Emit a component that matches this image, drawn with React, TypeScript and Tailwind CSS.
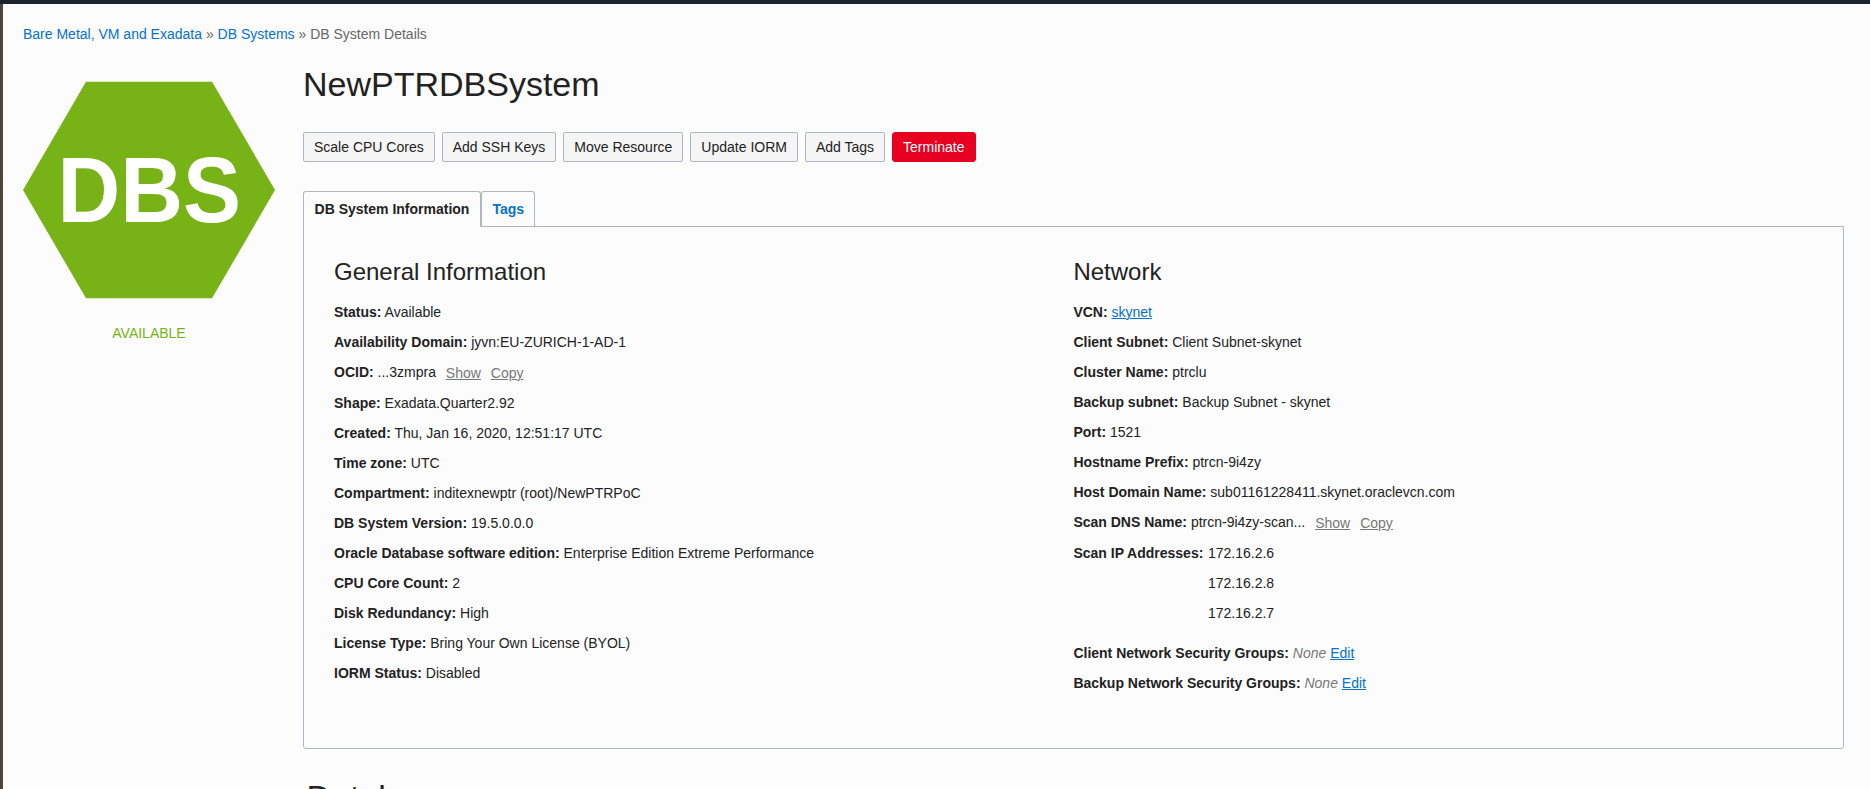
import type { ReactNode } from "react";

const actions = ["Scale CPU Cores", "Add SSH Keys", "Move Resource", "Update IORM", "Add Tags"];

function Row({ label, tall, children }: { label: string; tall?: boolean; children: ReactNode }) {
  return (
    <div className={tall ? "h-[31px] leading-[30px]" : "h-[30px] leading-[30px]"}>
      <span className="font-bold">{label}:</span> {children}
    </div>
  );
}

function BlueLink({ children }: { children: ReactNode }) {
  return (
    <a href="#" className="text-[#0572ce] underline">
      {children}
    </a>
  );
}

function ShowCopy() {
  return (
    <span className="relative top-px ml-[6px] inline-flex gap-[10px] text-[#777777]">
      <a href="#" className="underline">Show</a>
      <a href="#" className="underline">Copy</a>
    </span>
  );
}

function StatusBadge() {
  return (
    <div className="w-[252px] shrink-0">
      <svg viewBox="0 0 252 217" className="block h-[217px] w-[252px] overflow-visible">
        <polygon points="0,108 63,-0.3 189,-0.3 252,108 189,216.3 63,216.3" fill="#77b316" />
        <text
          x="0"
          y="0"
          transform="translate(126.3 140) scale(0.94 1)"
          textAnchor="middle"
          fill="#ffffff"
          fontSize="92.5"
          fontWeight="700"
          fontFamily="Liberation Sans, Arial, sans-serif"
        >
          DBS
        </text>
      </svg>
      <div className="mt-6 text-center leading-5 text-[#77b316]">AVAILABLE</div>
    </div>
  );
}

export default function App() {
  return (
    <div className="flex h-[789px] w-[1870px] flex-col overflow-hidden bg-[#fcfcfc] font-['Liberation_Sans',Arial,sans-serif] text-[14px] text-[#222222]">
      <div className="h-1 shrink-0 bg-[#1b2430]" />
      <div className="flex min-h-0 grow">
        <div className="w-[3px] shrink-0 bg-[#51443a]" />
        <div className="min-w-0 grow pl-5 pt-5">
          <nav className="h-5 leading-5 text-[#666666]">
            <a href="#" className="text-[#0572ce]">Bare Metal, VM and Exadata</a> »{" "}
            <a href="#" className="text-[#0572ce]">DB Systems</a> » DB System Details
          </nav>

          <div className="flex gap-7">
            <div className="pt-[38px]">
              <StatusBadge />
            </div>

            <main className="w-[1541px] pt-5">
              <h1 className="h-10 text-[34px] leading-10">NewPTRDBSystem</h1>

              <div className="mt-7 flex gap-[7px]">
                {actions.map((name) => (
                  <button
                    key={name}
                    className="h-[30px] rounded-[2px] border border-[#b0b7c3] bg-[#f5f5f5] px-[10px] leading-7"
                  >
                    {name}
                  </button>
                ))}
                <button className="h-[30px] rounded-[3px] border border-[#e7001f] bg-[#e7001f] px-[10px] leading-7 text-white">
                  Terminate
                </button>
              </div>

              <div className="mt-[29px] flex font-bold leading-[34px]">
                <div className="relative -mb-px h-9 rounded-t-[3px] border border-b-0 border-[#b0b7c3] bg-[#fcfcfc] px-[10.6px]">
                  DB System Information
                </div>
                <a
                  href="#"
                  className="h-[35px] rounded-t-[3px] border border-b-0 border-[#b0b7c3] pl-[10.4px] pr-[10px] text-[#0572ce]"
                >
                  Tags
                </a>
              </div>

              <section className="flex h-[523px] rounded-b-[3px] border border-[#b0b7c3] px-[30px] pt-[30px]">
                <div className="w-[739.4px] shrink-0">
                  <h2 className="mb-[10px] h-[30px] text-[24px] leading-[30px]">General Information</h2>
                  <Row label="Status">Available</Row>
                  <Row label="Availability Domain">jyvn:EU-ZURICH-1-AD-1</Row>
                  <Row label="OCID" tall>...3zmpra <ShowCopy /></Row>
                  <Row label="Shape">Exadata.Quarter2.92</Row>
                  <Row label="Created">Thu, Jan 16, 2020, 12:51:17 UTC</Row>
                  <Row label="Time zone">UTC</Row>
                  <Row label="Compartment">inditexnewptr (root)/NewPTRPoC</Row>
                  <Row label="DB System Version">19.5.0.0.0</Row>
                  <Row label="Oracle Database software edition">Enterprise Edition Extreme Performance</Row>
                  <Row label="CPU Core Count">2</Row>
                  <Row label="Disk Redundancy">High</Row>
                  <Row label="License Type">Bring Your Own License (BYOL)</Row>
                  <Row label="IORM Status">Disabled</Row>
                </div>
                <div className="grow">
                  <h2 className="mb-[10px] h-[30px] text-[24px] leading-[30px]">Network</h2>
                  <Row label="VCN"><BlueLink>skynet</BlueLink></Row>
                  <Row label="Client Subnet">Client Subnet-skynet</Row>
                  <Row label="Cluster Name">ptrclu</Row>
                  <Row label="Backup subnet">Backup Subnet - skynet</Row>
                  <Row label="Port">1521</Row>
                  <Row label="Hostname Prefix">ptrcn-9i4zy</Row>
                  <Row label="Host Domain Name">sub01161228411.skynet.oraclevcn.com</Row>
                  <Row label="Scan DNS Name" tall>ptrcn-9i4zy-scan... <ShowCopy /></Row>
                  <div className="mb-[10px] flex gap-[4.6px] leading-[30px]">
                    <span className="font-bold">Scan IP Addresses:</span>
                    <div>
                      <div>172.16.2.6</div>
                      <div>172.16.2.8</div>
                      <div>172.16.2.7</div>
                    </div>
                  </div>
                  <Row label="Client Network Security Groups">
                    <em className="text-[#777777]">None</em> <BlueLink>Edit</BlueLink>
                  </Row>
                  <Row label="Backup Network Security Groups">
                    <em className="text-[#777777]">None</em> <BlueLink>Edit</BlueLink>
                  </Row>
                </div>
              </section>

              <h1 className="mt-7 pl-[3.5px] text-[34px] leading-10">Databases</h1>
            </main>
          </div>
        </div>
      </div>
    </div>
  );
}
